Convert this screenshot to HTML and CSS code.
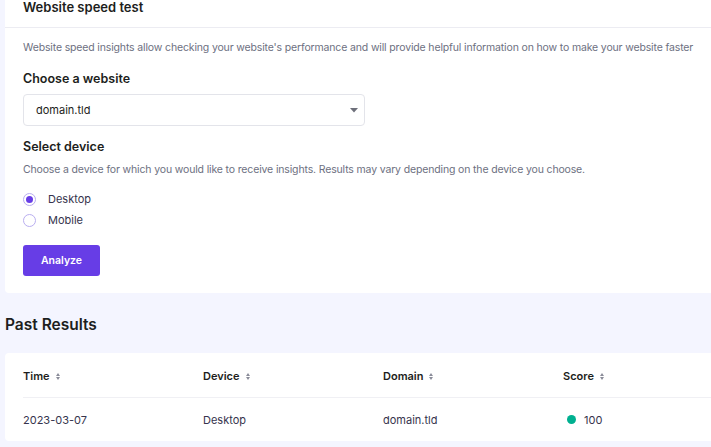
FILE: index.html
```html
<!DOCTYPE html>
<html lang="en">
<head>
<meta charset="utf-8">
<link rel="stylesheet" href="styles.css">
</head>
<body>
<div class="page">
  <section class="card speed">
    <header class="card-head">Website speed test</header>
    <div class="card-body">
      <p class="desc">Website speed insights allow checking your website's performance and will provide helpful information on how to make your website faster</p>
      <h3 class="label">Choose a website</h3>
      <div class="select">
        <span>domain.tld</span>
        <svg class="caret" width="8" height="5" viewBox="0 0 8 5"><path d="M0 0h8L4 4.5z" fill="#6d6f7a"/></svg>
      </div>
      <h3 class="label label-device">Select device</h3>
      <p class="desc desc-device">Choose a device for which you would like to receive insights. Results may vary depending on the device you choose.</p>
      <div class="radios">
        <div class="radio-row"><span class="radio checked"></span><span>Desktop</span></div>
        <div class="radio-row"><span class="radio"></span><span>Mobile</span></div>
      </div>
      <button class="btn">Analyze</button>
    </div>
  </section>

  <h2 class="title">Past Results</h2>

  <section class="card table">
    <div class="row head">
      <div class="cell">Time <span class="sort"></span></div>
      <div class="cell">Device <span class="sort"></span></div>
      <div class="cell">Domain <span class="sort"></span></div>
      <div class="cell">Score <span class="sort"></span></div>
    </div>
    <div class="row">
      <div class="cell">2023-03-07</div>
      <div class="cell">Desktop</div>
      <div class="cell">domain.tld</div>
      <div class="cell"><span class="dot"></span>100</div>
    </div>
  </section>
</div>
</body>
</html>
```
FILE: styles.css
```css
html, body {
  margin: 0;
  padding: 0;
  background: #f4f5ff;
  overflow: hidden;
  font-family: "Inter", "Noto Sans", sans-serif;
  color: #1d1e20;
}
.page {
  width: 760px;
  padding-left: 5px;
}
.card {
  background: #fff;
  border-radius: 4px;
}
.speed {
  margin-top: -16px;
}
.card-head {
  font-size: 13px;
  font-weight: 600;
  line-height: 16px;
  padding: 15px 18px 12px;
  border-bottom: 1px solid #ececf2;
}
.card-body {
  padding: 13px 18px 17px;
}
.desc {
  margin: 0;
  font-size: 10.5px;
  letter-spacing: -0.15px;
  line-height: 14px;
  color: #6d7081;
}
.label {
  margin: 16px 0 0;
  font-size: 12.5px;
  font-weight: 600;
  line-height: 16px;
}
.select {
  margin-top: 7px;
  height: 30px;
  border: 1px solid #e3e4ea;
  border-radius: 4px;
  display: flex;
  align-items: center;
  justify-content: space-between;
  padding: 0 6px 0 12px;
  box-sizing: content-box;
  font-size: 11px;
  width: 322px;
}
.caret {
  display: block;
}
.label-device {
  margin-top: 13px;
}
.desc-device {
  margin-top: 8px;
}
.radios {
  margin-top: 15px;
  display: flex;
  flex-direction: column;
  gap: 7px;
  font-size: 11px;
  color: #36344d;
}
.radio-row {
  display: flex;
  align-items: center;
  gap: 12px;
  height: 14px;
}
.radio {
  width: 11px;
  height: 11px;
  border: 1px solid #b9aef0;
  border-radius: 50%;
  box-sizing: content-box;
  display: flex;
  align-items: center;
  justify-content: center;
}
.radio.checked::after {
  content: "";
  width: 7px;
  height: 7px;
  border-radius: 50%;
  background: #673de6;
}
.btn {
  margin-top: 18px;
  width: 77px;
  height: 31px;
  border: 0;
  border-radius: 3px;
  background: #673de6;
  color: #fff;
  font-family: inherit;
  font-size: 10.5px;
  font-weight: 600;
  padding: 0;
}
.title {
  margin: 0;
  padding: 22px 0 0;
  height: 38px;
  font-size: 15.5px;
  font-weight: 600;
  line-height: 20px;
}
.table {
  padding: 0 18px;
}
.row {
  display: grid;
  grid-template-columns: repeat(4, 180px);
  align-items: center;
  height: 43px;
  font-size: 11px;
  color: #36344d;
}
.row.head {
  height: 42px;
  padding-top: 2px;
  border-bottom: 1px solid #f0f0f4;
  font-weight: 600;
  color: #1d1e20;
}
.cell {
  display: flex;
  align-items: center;
}
.sort {
  margin-left: 6px;
  display: inline-flex;
  flex-direction: column;
  gap: 1px;
}
.sort::before, .sort::after {
  content: "";
  border-left: 2.5px solid transparent;
  border-right: 2.5px solid transparent;
}
.sort::before {
  border-bottom: 3px solid #8a8c99;
}
.sort::after {
  border-top: 3px solid #8a8c99;
}
.dot {
  width: 9px;
  height: 9px;
  border-radius: 50%;
  background: #00b090;
  margin: 0 8px 0 4px;
}
```
